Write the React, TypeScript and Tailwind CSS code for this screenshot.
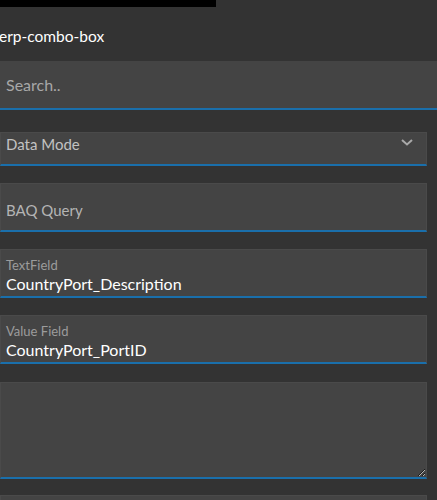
import React from "react";

const font = { fontFamily: 'Lato, "Noto Sans", sans-serif' };

function Chevron() {
  return (
    <svg width="12" height="7" viewBox="0 0 12 7" className="block">
      <path d="M1 1 L6 5.5 L11 1" stroke="#a9a9a9" strokeWidth="2" fill="none" />
    </svg>
  );
}

export default function App() {
  return (
    <div className="h-[500px] w-[437px] overflow-hidden bg-[#333333]" style={font}>
      <div className="h-[7px] w-[216px] bg-black" />
      <div className="h-[54px] pt-[19px]">
        <div className="ml-[-1px] text-[15.5px] leading-[20px] text-white">erp-combo-box</div>
      </div>

      <div className="flex h-[49px] w-[437px] items-center border-b-2 border-[#1a6fab] bg-[#444444] px-[6px]">
        <span className="pt-[1px] text-[16px] text-[#a8a8a8]">Search..</span>
      </div>

      <div className="mt-[22px] flex w-[427px] flex-col">
        <div className="flex h-[34px] items-start justify-between border border-b-2 border-[#4a4a4a] border-b-[#1a6fab] bg-[#444444] pl-[5px] pr-[13px]">
          <span className="pt-[1px] text-[15px] leading-[20px] text-[#c2c2c2]">Data Mode</span>
          <span className="pt-[6px]"><Chevron /></span>
        </div>

        <div className="mt-[17px] flex h-[49px] items-end border border-b-2 border-[#4a4a4a] border-b-[#1a6fab] bg-[#444444] px-[5px] pb-[10px]">
          <span className="text-[15px] leading-[20px] text-[#b4b4b4]">BAQ Query</span>
        </div>

        <div className="mt-[17px] flex h-[49px] flex-col border border-b-2 border-[#4a4a4a] border-b-[#1a6fab] bg-[#444444] px-[5px] pt-[8px]">
          <span className="text-[13px] leading-[14px] text-[#9c9c9c]">TextField</span>
          <span className="mt-[3px] text-[16px] leading-[18px] text-white">CountryPort_Description</span>
        </div>

        <div className="mt-[17px] flex h-[49px] flex-col border border-b-2 border-[#4a4a4a] border-b-[#1a6fab] bg-[#444444] px-[5px] pt-[8px]">
          <span className="text-[13px] leading-[14px] text-[#9c9c9c]">Value Field</span>
          <span className="mt-[3px] text-[16px] leading-[18px] text-white">CountryPort_PortID</span>
        </div>

        <textarea
          className="mt-[18px] block h-[97px] w-[427px] resize-y border border-b-2 border-[#4a4a4a] border-b-[#1a6fab] bg-[#444444] px-[6px] text-white outline-none"
          style={{ colorScheme: "light" }}
        />

        <div className="mt-[16px] h-[49px] border border-[#4a4a4a] bg-[#444444]" />
      </div>
    </div>
  );
}
